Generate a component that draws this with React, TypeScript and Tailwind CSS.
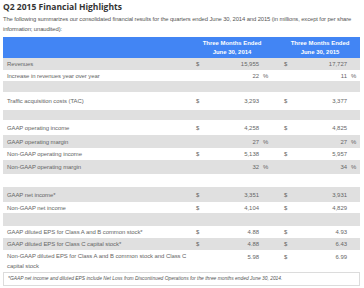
type Cell = [string, string, string?]

type Row = {
  label: string
  a?: Cell
  b?: Cell
  h: number
  top?: boolean
}

const rows: Row[] = [
  { label: 'Revenues', a: ['$', '15,955'], b: ['$', '17,727'], h: 12 },
  { label: 'Increase in revenues year over year', a: ['', '22', '%'], b: ['', '11', '%'], h: 11 },
  { label: '', h: 11 },
  { label: 'Traffic acquisition costs (TAC)', a: ['$', '3,293'], b: ['$', '3,377'], h: 18 },
  { label: '', h: 10 },
  { label: 'GAAP operating income', a: ['$', '4,258'], b: ['$', '4,825'], h: 15 },
  { label: 'GAAP operating margin', a: ['', '27', '%'], b: ['', '27', '%'], h: 13 },
  { label: 'Non-GAAP operating income', a: ['$', '5,138'], b: ['$', '5,957'], h: 12 },
  { label: 'Non-GAAP operating margin', a: ['', '32', '%'], b: ['', '34', '%'], h: 14 },
  { label: '', h: 13 },
  { label: 'GAAP net income*', a: ['$', '3,351'], b: ['$', '3,931'], h: 15 },
  { label: 'Non-GAAP net income', a: ['$', '4,104'], b: ['$', '4,829'], h: 11 },
  { label: '', h: 13 },
  { label: 'GAAP diluted EPS for Class A and B common stock*', a: ['$', '4.88'], b: ['$', '4.93'], h: 12 },
  { label: 'GAAP diluted EPS for Class C capital stock*', a: ['$', '4.88'], b: ['$', '6.43'], h: 12 },
  {
    label: 'Non-GAAP diluted EPS for Class A and B common stock and Class C\ncapital stock',
    a: ['', '5.98'],
    b: ['$', '6.99'],
    h: 22,
    top: true,
  },
]

function Value({ cell, top }: { cell?: Cell; top?: boolean }) {
  return (
    <div className={`flex h-full ${top ? 'items-start pt-[2px]' : 'items-center'}`}>
      <span className="w-[14px] pl-[4px]">{cell?.[0]}</span>
      <span className="flex-1 text-right">{cell?.[1]}</span>
      <span className="w-[13px] pl-[4px]">{cell?.[2]}</span>
    </div>
  )
}

export default function App() {
  return (
    <div className="w-[364px] h-[288px] overflow-hidden bg-white px-[3px] font-['Liberation_Sans',Arial,sans-serif]">
      <h1 className="h-[13px] pt-[1px] text-[8.5px] leading-[12px] font-bold text-[#333] font-['Open_Sans',sans-serif]">
        Q2 2015 Financial Highlights
      </h1>
      <p className="mt-[1px] text-[5.85px] leading-[10px] tracking-[-0.1px] text-[#555]">
        The following summarizes our consolidated financial results for the quarters ended June 30, 2014 and 2015 (in
        millions, except for per share information; unaudited):
      </p>

      <div className="mt-[3px] w-[357px] text-[5.95px] leading-[10px] text-[#666]">
        <div className="grid h-[21px] grid-cols-[189px_80px_8px_80px] items-center bg-[#4285f4] text-center font-bold leading-[8.5px] text-white">
          <div />
          <div>
            Three Months Ended
            <br />
            June 30, 2014
          </div>
          <div />
          <div>
            Three Months Ended
            <br />
            June 30, 2015
          </div>
        </div>

        {rows.map((r, i) => (
          <div
            key={i}
            style={{ height: r.h }}
            className={`grid grid-cols-[189px_80px_8px_80px] ${i % 2 === 0 ? 'bg-[#e0e0e0]' : 'bg-white'}`}
          >
            <div className="flex items-center whitespace-pre pl-[4px] tracking-[-0.06px]">{r.label}</div>
            <Value cell={r.a} top={r.top} />
            <div />
            <Value cell={r.b} top={r.top} />
          </div>
        ))}

        <div className="h-[14px] border border-[#dcdcdc] pl-[4px] text-[4.9px] italic leading-[12px] text-[#555]">
          *GAAP net income and diluted EPS include Net Loss from Discontinued Operations for the three months ended June
          30, 2014.
        </div>
      </div>
    </div>
  )
}
